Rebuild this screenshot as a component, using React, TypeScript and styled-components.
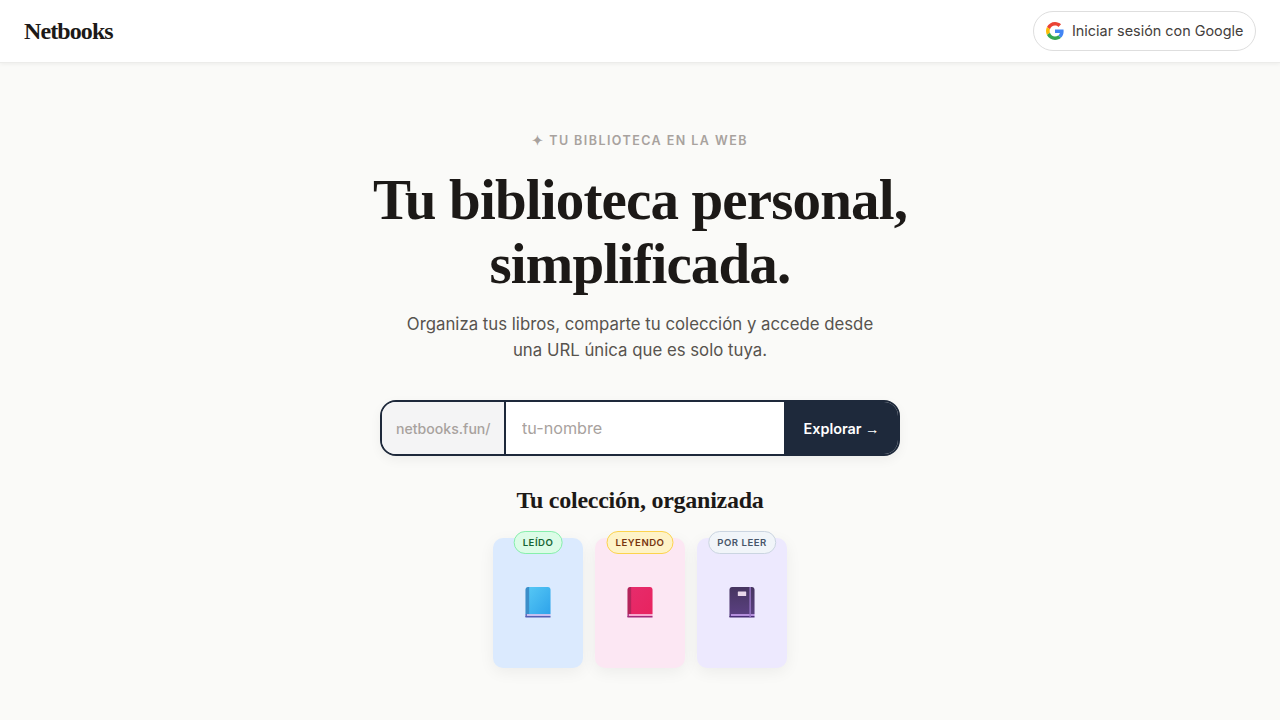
import React from 'react';
import styled, { createGlobalStyle } from 'styled-components';

const GlobalStyle = createGlobalStyle`
  html, body {
    margin: 0;
    padding: 0;
    background: #fafaf8;
    overflow: hidden;
  }
  * { box-sizing: border-box; }
`;

const Page = styled.div`
  height: 720px;
  overflow: hidden;
  font-family: Inter, "Liberation Sans", sans-serif;
  color: #1c1917;
`;

const Header = styled.header`
  height: 63px;
  padding: 0 24px;
  display: flex;
  align-items: center;
  justify-content: space-between;
  background: #fff;
  border-bottom: 1px solid #ececea;
  box-shadow: 0 1px 4px rgba(0, 0, 0, 0.06);
`;

const Logo = styled.div`
  font-family: "Liberation Serif", serif;
  font-weight: 700;
  font-size: 24px;
  letter-spacing: -0.9px;
  color: #1c1917;
`;

const GoogleButton = styled.button`
  width: 223px;
  height: 40px;
  margin-top: -1px;
  padding: 0 0 0 12px;
  display: flex;
  align-items: center;
  gap: 8px;
  white-space: nowrap;
  background: #fff;
  border: 1px solid #dedede;
  border-radius: 20px;
  font-family: inherit;
  font-size: 14.4px;
  font-weight: 400;
  color: #44403c;
`;

const Hero = styled.main`
  display: flex;
  flex-direction: column;
  align-items: center;
  padding-top: 69px;
`;

const Eyebrow = styled.div`
  height: 17px;
  font-size: 12.5px;
  line-height: 17px;
  font-weight: 600;
  letter-spacing: 1.45px;
  color: #a8a29e;
`;

const Headline = styled.h1`
  margin: 19px 0 0;
  font-family: "Liberation Serif", serif;
  font-weight: 700;
  font-size: 57px;
  line-height: 64px;
  letter-spacing: -0.85px;
  text-align: center;
  color: #1c1917;
`;

const Lead = styled.p`
  margin: 15px 0 0;
  font-size: 16.8px;
  line-height: 26px;
  text-align: center;
  color: #57534e;
`;

const UrlForm = styled.form`
  width: 520px;
  height: 56px;
  margin-top: 37px;
  display: flex;
  border: 2px solid #1e293b;
  border-radius: 16px;
  overflow: hidden;
  background: #fff;
  box-shadow: 0 4px 12px rgba(0, 0, 0, 0.05);
`;

const Prefix = styled.span`
  width: 124px;
  padding-left: 14px;
  display: flex;
  align-items: center;
  background: #f4f4f5;
  border-right: 2px solid #1e293b;
  font-size: 14.1px;
  font-weight: 500;
  color: #a8a29e;
`;

const NameInput = styled.input`
  flex: 1;
  min-width: 0;
  padding: 0 16px;
  border: 0;
  outline: 0;
  background: #fff;
  font-family: inherit;
  font-size: 16.2px;
  color: #1c1917;

  &::placeholder {
    color: #a8a29e;
    opacity: 1;
  }
`;

const ExploreButton = styled.button`
  width: 114px;
  padding: 0 0 0 1px;
  border: 0;
  background: #1e293b;
  font-family: inherit;
  font-size: 14.4px;
  font-weight: 600;
  color: #fff;
`;

const Arrow = styled.span`
  font-family: "Liberation Sans", sans-serif;
  font-weight: 400;
`;

const CollectionTitle = styled.h2`
  margin: 29px 0 0;
  font-family: "Liberation Serif", serif;
  font-weight: 700;
  font-size: 24px;
  line-height: 30px;
  letter-spacing: -0.25px;
  color: #1c1917;
`;

const Shelf = styled.div`
  margin-top: 23px;
  display: flex;
  gap: 12px;
`;

const Card = styled.div<{ $bg: string }>`
  position: relative;
  width: 90px;
  height: 130px;
  padding-bottom: 2px;
  display: flex;
  align-items: center;
  justify-content: center;
  border-radius: 10px;
  background: ${(props) => props.$bg};
  box-shadow: 0 4px 16px rgba(0, 0, 0, 0.06);
`;

const Badge = styled.span<{ $bg: string; $line: string; $ink: string }>`
  position: absolute;
  top: -7px;
  left: 50%;
  transform: translateX(-50%);
  height: 23px;
  padding: 0 8px;
  display: flex;
  align-items: center;
  white-space: nowrap;
  border-radius: 12px;
  border: 1px solid ${(props) => props.$line};
  background: ${(props) => props.$bg};
  font-size: 9.6px;
  font-weight: 600;
  letter-spacing: 0.5px;
  color: ${(props) => props.$ink};
`;

const GoogleIcon = () => (
  <svg width="18" height="18" viewBox="0 0 48 48">
    <path fill="#EA4335" d="M24 9.5c3.54 0 6.71 1.22 9.21 3.6l6.85-6.85C35.9 2.38 30.47 0 24 0 14.62 0 6.51 5.38 2.56 13.22l7.98 6.19C12.43 13.72 17.74 9.5 24 9.5z" />
    <path fill="#4285F4" d="M46.98 24.55c0-1.57-.15-3.09-.38-4.55H24v9.02h12.94c-.58 2.96-2.26 5.48-4.78 7.18l7.73 6c4.51-4.18 7.09-10.36 7.09-17.65z" />
    <path fill="#FBBC05" d="M10.53 28.59c-.48-1.45-.76-2.99-.76-4.59s.27-3.14.76-4.59l-7.98-6.19C.92 16.46 0 20.12 0 24c0 3.88.92 7.54 2.56 10.78l7.97-6.19z" />
    <path fill="#34A853" d="M24 48c6.48 0 11.93-2.13 15.89-5.81l-7.73-6c-2.15 1.45-4.92 2.3-8.16 2.3-6.26 0-11.57-4.22-13.47-9.91l-7.98 6.19C6.51 42.62 14.62 48 24 48z" />
  </svg>
);

const BlueBook = () => (
  <svg width="26" height="32" viewBox="0 0 28 32" preserveAspectRatio="none">
    <defs>
      <linearGradient id="blue-cover" x1="0" y1="0" x2="1" y2="1">
        <stop offset="0" stopColor="#56c8f5" />
        <stop offset="1" stopColor="#2ea3ea" />
      </linearGradient>
    </defs>
    <path fill="url(#blue-cover)" d="M3 1h22a2.500 2.500 0 0 1 2.500 2.500V28H3z" />
    <path fill="#3b8ec9" d="M3 1h1.500v27H.5V3.500A2.500 2.500 0 0 1 3 1z" />
    <rect x="1.500" y="28" width="26" height="2" fill="#c6bff0" />
    <rect x="0.500" y="30" width="27" height="1.500" fill="#5560b5" />
    <rect x="0.500" y="28" width="1.500" height="3" fill="#5560b5" />
  </svg>
);

const RedBook = () => (
  <svg width="26" height="32" viewBox="0 0 28 32" preserveAspectRatio="none">
    <defs>
      <linearGradient id="red-cover" x1="0" y1="0" x2="1" y2="1">
        <stop offset="0" stopColor="#e62c6c" />
        <stop offset="1" stopColor="#e8235f" />
      </linearGradient>
    </defs>
    <path fill="url(#red-cover)" d="M3 1h22a2.500 2.500 0 0 1 2.500 2.500V28H3z" />
    <path fill="#b3245a" d="M3 1h1.500v27H.5V3.500A2.500 2.500 0 0 1 3 1z" />
    <rect x="1.500" y="28" width="26" height="2" fill="#f6a8cd" />
    <rect x="0.500" y="30" width="27" height="1.500" fill="#a32a7c" />
    <rect x="0.500" y="28" width="1.500" height="3" fill="#a32a7c" />
  </svg>
);

const PurpleBook = () => (
  <svg width="26" height="32" viewBox="0 0 28 32" preserveAspectRatio="none">
    <defs>
      <linearGradient id="purple-cover" x1="0" y1="0" x2="0" y2="1">
        <stop offset="0" stopColor="#463560" />
        <stop offset="1" stopColor="#5a4080" />
      </linearGradient>
    </defs>
    <path fill="url(#purple-cover)" d="M3 1h22a2.500 2.500 0 0 1 2.500 2.500V28H.5V3.500A2.500 2.500 0 0 1 3 1z" />
    <rect x="9.500" y="5.500" width="9" height="4.500" rx="0.500" fill="#e8d8ea" />
    <rect x="1.500" y="28" width="26" height="2" fill="#b48fdc" />
    <rect x="0.500" y="30" width="27" height="1.500" fill="#4a2f78" />
    <rect x="22" y="1" width="1.500" height="30.500" fill="#9a78c8" />
    <rect x="0.500" y="28" width="1.500" height="3" fill="#4a2f78" />
  </svg>
);

const books = [
  { label: 'LEÍDO', bg: '#dbeafe', badgeBg: '#dcfce7', line: '#86efac', ink: '#166534', icon: <BlueBook /> },
  { label: 'LEYENDO', bg: '#fce7f3', badgeBg: '#fef3c7', line: '#fcd34d', ink: '#78350f', icon: <RedBook /> },
  { label: 'POR LEER', bg: '#ede9fe', badgeBg: '#f1f5f9', line: '#cbd5e1', ink: '#475569', icon: <PurpleBook /> },
];

const App: React.FC = function () {
  return (
    <Page>
      <GlobalStyle />
      <Header>
        <Logo>Netbooks</Logo>
        <GoogleButton type="button">
          <GoogleIcon />
          Iniciar sesión con Google
        </GoogleButton>
      </Header>
      <Hero>
        <Eyebrow>✦ TU BIBLIOTECA EN LA WEB</Eyebrow>
        <Headline>
          Tu biblioteca personal,
          <br />
          simplificada.
        </Headline>
        <Lead>
          Organiza tus libros, comparte tu colección y accede desde
          <br />
          una URL única que es solo tuya.
        </Lead>
        <UrlForm onSubmit={(event) => event.preventDefault()}>
          <Prefix>netbooks.fun/</Prefix>
          <NameInput placeholder="tu-nombre" />
          <ExploreButton type="submit">
            Explorar <Arrow>→</Arrow>
          </ExploreButton>
        </UrlForm>
        <CollectionTitle>Tu colección, organizada</CollectionTitle>
        <Shelf>
          {books.map((book) => (
            <Card key={book.label} $bg={book.bg}>
              <Badge $bg={book.badgeBg} $line={book.line} $ink={book.ink}>
                {book.label}
              </Badge>
              {book.icon}
            </Card>
          ))}
        </Shelf>
      </Hero>
    </Page>
  );
};

export default App;
